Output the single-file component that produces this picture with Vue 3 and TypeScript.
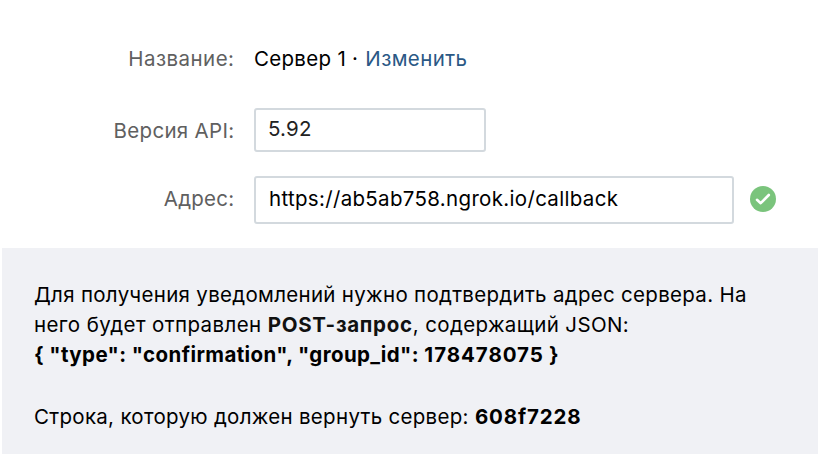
<script setup lang="ts">
import { ref } from 'vue'

const serverName = ref('Сервер 1')
const apiVersion = ref('5.92')
const address = ref('https://ab5ab758.ngrok.io/callback')
const groupId = 178478075
const confirmation = '608f7228'
</script>

<template>
  <main class="page">
    <section class="form">
      <div class="row name-row">
        <span class="label">Название:</span>
        <div class="value">
          <span class="name">{{ serverName }}</span>
          <span class="dot">·</span>
          <a class="link">Изменить</a>
        </div>
      </div>
      <div class="row version-row">
        <span class="label">Версия API:</span>
        <div class="field short"><span class="version">{{ apiVersion }}</span></div>
      </div>
      <div class="row address-row">
        <span class="label">Адрес:</span>
        <div class="field long"><span class="address">{{ address }}</span></div>
        <svg class="check" viewBox="0 0 26 26" width="26" height="26">
          <circle cx="13" cy="13" r="13" fill="#7ac47c" />
          <path d="M7 13.8l3.7 3.4 8.1-8.2" fill="none" stroke="#fff" stroke-width="2.6" stroke-linecap="round" stroke-linejoin="round" />
        </svg>
      </div>
    </section>
    <section class="notice">
      <p>Для получения уведомлений нужно подтвердить адрес сервера. На</p>
      <p><span class="lead">него будет отправлен </span><b class="method">POST-запрос</b><span class="tail">, содержащий JSON:</span></p>
      <p><b class="payload">{ "type": "confirmation", "group_id": <span class="id">{{ groupId }}</span> }</b></p>
      <p class="last">Строка, которую должен вернуть сервер: <b class="code">{{ confirmation }}</b></p>
    </section>
  </main>
</template>

<style>
body {
  background: #fff;
}
</style>

<style scoped>
.page {
  box-sizing: border-box;
  width: 826px;
  height: 454px;
  overflow: hidden;
  display: flex;
  flex-direction: column;
  font: 20.5px/30px Inter, "Open Sans", sans-serif;
  letter-spacing: 0.3px;
  color: #000;
}
.form {
  box-sizing: border-box;
  height: 248px;
  padding-top: 44px;
}
.row {
  display: flex;
  align-items: center;
  white-space: pre;
}
.label {
  width: 234.4px;
  margin-right: 19.6px;
  text-align: right;
  color: #606060;
}
.name-row { height: 30px; }
.name-row .label { letter-spacing: 0.45px; }
.value { display: flex; }
.dot { margin: 0 7px 0 6px; }
.name { letter-spacing: 0.3px; }
.link { color: #2a5885; letter-spacing: 0.4px; }
.version-row { height: 44px; margin-top: 34px; }
.version-row .label { padding-top: 2px; }
.address-row { height: 48px; margin-top: 24px; }
.address-row .label { padding-bottom: 2px; letter-spacing: 0.25px; }
.field {
  box-sizing: border-box;
  height: 100%;
  border: 2px solid #d3d9de;
  border-radius: 3px;
  padding: 0 0 2px 13px;
  display: flex;
  align-items: center;
}
.short { width: 232px; padding-left: 12px; }
.version { color: #222; letter-spacing: 0.2px; }
.long { width: 480px; }
.address { letter-spacing: 0.32px; }
.check { margin: 0 0 2px 16px; }
.notice {
  box-sizing: border-box;
  height: 206px;
  margin: 0 8px 0 2px;
  padding: 32px 0 0 32px;
  background: #f0f1f5;
  white-space: pre;
}
p { margin: 0; }
.last { margin-top: 32px; }
b { font-weight: 700; }
.lead { letter-spacing: 0.4px; }
.method { color: #111; letter-spacing: 0.7px; }
.tail { letter-spacing: 0.36px; }
.payload { letter-spacing: 0.4px; }
.id { letter-spacing: 0.95px; }
.code { letter-spacing: 0.85px; }
</style>
